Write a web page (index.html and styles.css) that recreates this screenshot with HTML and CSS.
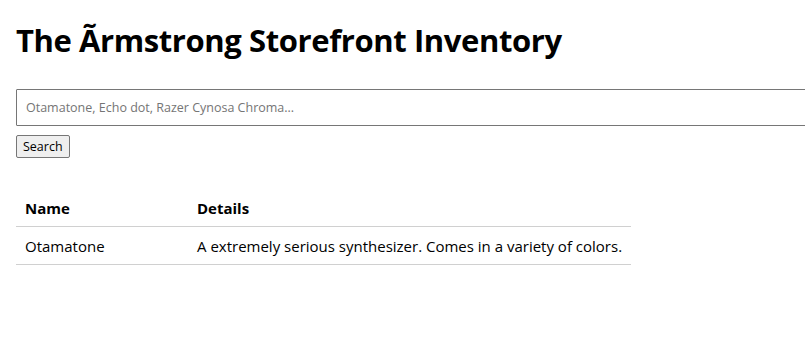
FILE: index.html
```html
<!DOCTYPE html>
<html lang="en">
<head>
<meta charset="utf-8">
<title>The Ãrmstrong Storefront Inventory</title>
<link rel="stylesheet" href="styles.css">
</head>
<body>
<div class="page">
  <h1 class="title">The Ãrmstrong Storefront Inventory</h1>
  <form class="search">
    <input class="search-input" type="text" placeholder="Otamatone, Echo dot, Razer Cynosa Chroma...">
    <button class="search-button" type="button">Search</button>
  </form>
  <table class="inventory">
    <thead>
      <tr><th class="col-name">Name</th><th>Details</th></tr>
    </thead>
    <tbody>
      <tr><td class="col-name">Otamatone</td><td>A extremely serious synthesizer. Comes in a variety of colors.</td></tr>
    </tbody>
  </table>
</div>
</body>
</html>
```
FILE: styles.css
```css
html, body {
  margin: 0;
  padding: 0;
  background: #fff;
}
body {
  font-family: "Open Sans", "Noto Sans", sans-serif;
  color: #000;
  overflow: hidden;
}
.page {
  padding: 0 16px;
  overflow: hidden;
}
.title {
  font-size: 31px;
  line-height: 40px;
  font-weight: 700;
  margin: 20px 0 29px;
  letter-spacing: -0.4px;
}
.search {
  display: flex;
  flex-direction: column;
  align-items: flex-start;
  gap: 9px;
  margin: 0;
}
.search-input {
  box-sizing: border-box;
  width: 820px;
  height: 37px;
  padding: 0 9px;
  border: 1px solid #767676;
  border-radius: 1px;
  font-family: inherit;
  font-size: 12.5px;
  color: #000;
  outline: none;
}
.search-input::placeholder {
  color: #757575;
}
.search-button {
  box-sizing: border-box;
  height: 23px;
  padding: 0 6px;
  font-family: inherit;
  font-size: 12.5px;
  color: #000;
  background: #efefef;
  border: 1px solid #767676;
  border-radius: 2px;
}
.inventory {
  margin-top: 31px;
  width: 615px;
  table-layout: fixed;
  border-collapse: collapse;
  font-size: 15px;
}
.inventory th,
.inventory td {
  text-align: left;
  padding: 7px 9px 6px;
  line-height: 24px;
  white-space: nowrap;
  border-bottom: 1px solid #d0d0d0;
}
.inventory thead th {
  font-weight: 700;
}
.col-name {
  width: 154px;
}
```
